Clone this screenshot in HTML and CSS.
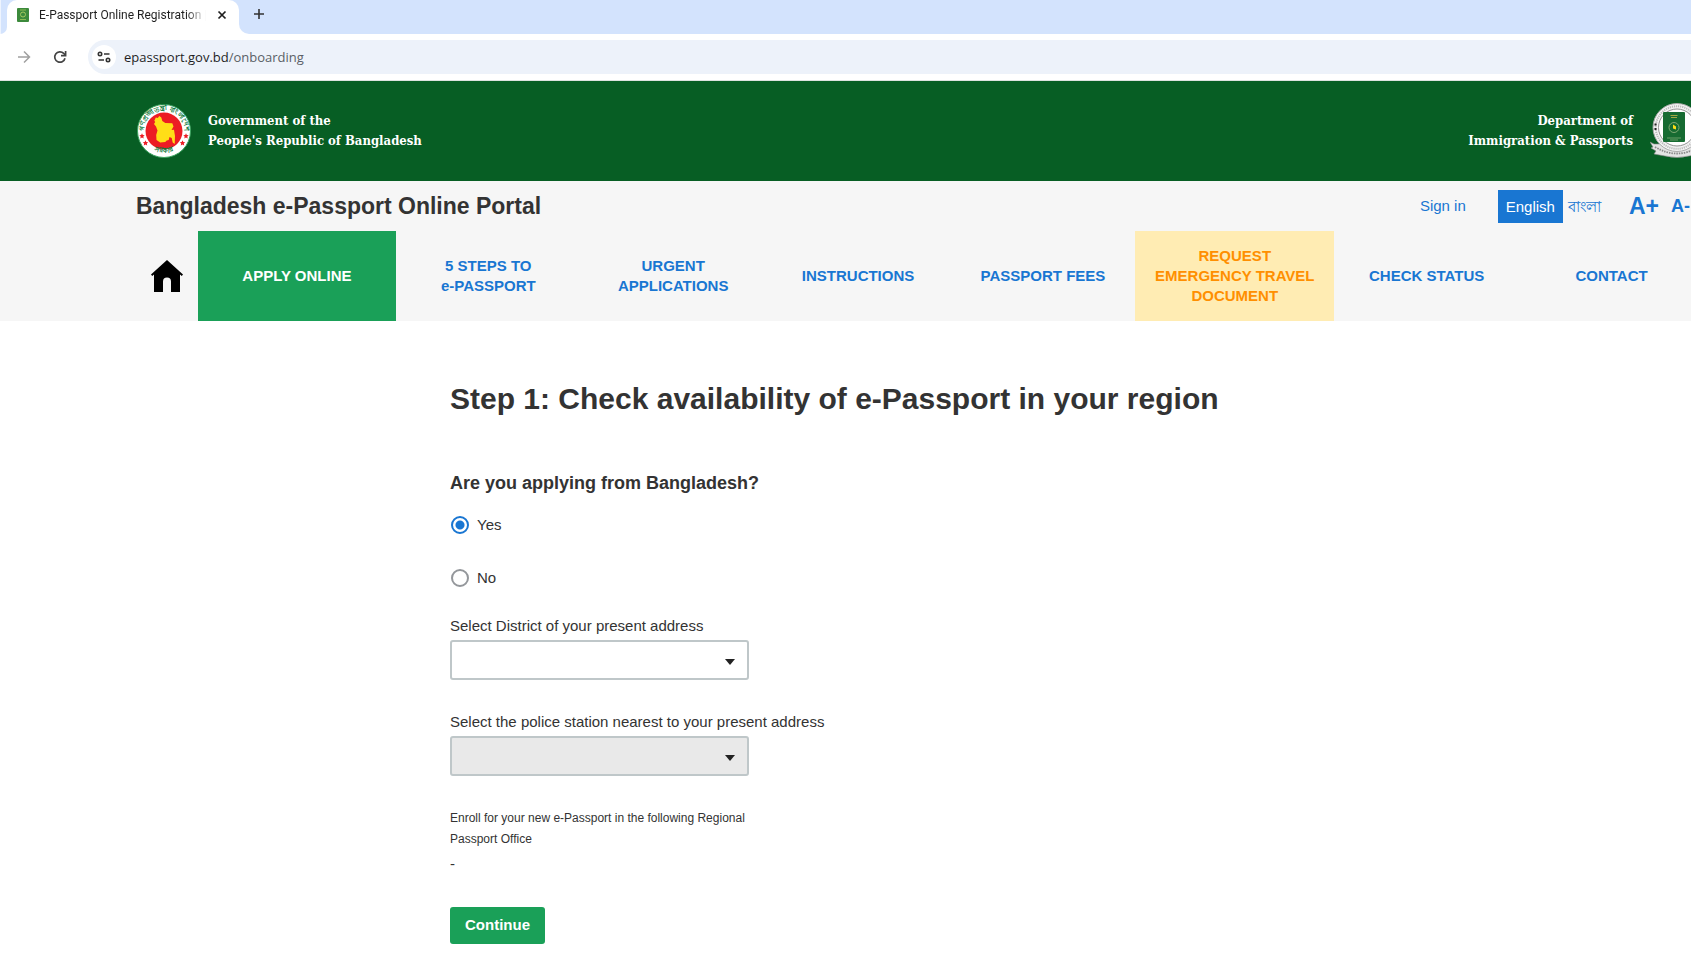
FILE: index.html
```html
<!DOCTYPE html>
<html lang="en">
<head>
    <meta charset="UTF-8">
    <meta name="viewport" content="width=device-width, initial-scale=1.0">
    <title>E-Passport Online Registration Portal</title>
    <link rel="stylesheet" href="styles.css">
</head>
<body>
    <div class="browser">
        <div class="tabs">
            <div class="prev-tab"></div>
            <div class="tab">
                <svg class="favicon" width="12" height="14" viewBox="0 0 12 14">
                    <rect width="12" height="14" rx="1" fill="#3c8a3c"/>
                    <circle cx="6" cy="6.500" r="2.500" fill="none" stroke="#a5c860"/>
                    <path d="M3 2h6M3 11.500h6" stroke="#8dbb55"/>
                </svg>
                <span class="tab-title">E-Passport Online Registration |</span>
                <button class="icon-button" aria-label="Close tab">
                    <svg width="10" height="10" viewBox="0 0 10 10"><path d="M1.500 1.500l7 7M8.500 1.500l-7 7" stroke="#1f1f1f" stroke-width="1.700"/></svg>
                </button>
            </div>
            <div class="tab-strip">
                <button class="icon-button new-tab" aria-label="New tab">
                    <svg width="12" height="12" viewBox="0 0 12 12"><path d="M6 1v10M1 6h10" stroke="#333" stroke-width="1.600"/></svg>
                </button>
            </div>
        </div>
        <div class="toolbar">
            <button class="icon-button" aria-label="Forward">
                <svg width="14" height="14" viewBox="0 0 14 14" fill="none" stroke="#a0a0a0" stroke-width="1.500"><path d="M1 7h11M7 1.500L12.500 7 7 12.500"/></svg>
            </button>
            <button class="icon-button" aria-label="Reload">
                <svg width="14" height="14" viewBox="0 0 14 14" fill="none" stroke="#444" stroke-width="1.700"><path d="M12 8.200A5.200 5.200 0 1 1 10.700 3.400L12.300 5"/><path d="M12.600 1v4.600H8"/></svg>
            </button>
            <div class="address">
                <button class="site-info" aria-label="Site information">
                    <svg width="14" height="12" viewBox="0 0 14 12" fill="none" stroke="#333" stroke-width="1.600"><circle cx="3" cy="3" r="1.700"/><path d="M7 3h5.500M1.500 9H7"/><circle cx="11" cy="9" r="1.700"/></svg>
                </button>
                <span class="url">epassport.gov.bd<span class="url-path">/onboarding</span></span>
            </div>
        </div>
    </div>

    <header>
        <div class="banner">
            <div class="wrap banner-row">
                <svg class="seal" width="55" height="54" viewBox="0 0 55 54">
                    <defs>
                        <path id="ringTop" d="M8.500 32A20.200 20.200 0 1 1 47.500 32"/>
                        <path id="ringBottom" d="M10 41A24.500 24.500 0 0 0 46 41"/>
                    </defs>
                    <circle cx="28" cy="27" r="26.500" fill="#fff" stroke="#3ba35f"/>
                    <circle cx="28" cy="27" r="18.500" fill="#ec1c24"/>
                    <path d="M18.300 16.700l1.500-3.200 2 .6 1.500-2.100 2 1.500 1 3.500 3 2 7 .3 1.200 3.200-2 3.500 2.500-.2 1 6.200-.3 8-2-1.500-1-4.500-2.200-1-.8 3-2 .5-1.500 1.500-5 .6-3.700-2.500-.3-5 1.300-4.500-1.500-4-2-2.500 1.200-2z" fill="#ffde17"/>
                    <text class="ring-text"><textPath href="#ringTop" startOffset="50%" text-anchor="middle">গণপ্রজাতন্ত্রী বাংলাদেশ</textPath></text>
                    <text class="ring-text"><textPath href="#ringBottom" startOffset="50%" text-anchor="middle">সরকার</textPath></text>
                    <g fill="#ec1c24">
                        <path id="star" d="M6 29.300l.8 1.700 1.900.2-1.400 1.300.4 1.900-1.700-1-1.700 1 .4-1.900-1.400-1.300 1.900-.2z"/>
                        <use href="#star" x="3.500" y="7"/>
                        <use href="#star" x="44" y="0"/>
                        <use href="#star" x="40.500" y="7"/>
                    </g>
                </svg>
                <p class="banner-text">Government of the<br>People's Republic of Bangladesh</p>
                <p class="banner-text dept">Department of<br>Immigration &amp; Passports</p>
                <svg class="seal" width="54" height="56" viewBox="0 0 54 56">
                    <path d="M4 41l-4-2 3 5-2 1 5 3-2 3 11 2q12 3 24 0l11-2-2-3 5-3-2-1 3-5-4 2z" fill="#e4e4e4" stroke="#888" stroke-width=".6"/>
                    <circle cx="27" cy="24.500" r="24" fill="#f4f4f4" stroke="#aaa"/>
                    <circle cx="27" cy="24.500" r="21.300" fill="none" stroke="#bbb" stroke-width="2" stroke-dasharray="1.200 .9"/>
                    <circle cx="27" cy="24.500" r="18.500" fill="#fff" stroke="#777" stroke-width=".8"/>
                    <path d="M5.500 20.500v2M5.500 25v2" stroke="#222" stroke-width="2"/>
                    <path d="M5 44q22 13 44 0" fill="none" stroke="#888" stroke-width="1.800" stroke-dasharray="1.500 1"/>
                    <rect x="13" y="9" width="22" height="30" rx="1" fill="#176b32"/>
                    <circle cx="24" cy="24.500" r="5" fill="none" stroke="#7fa872" stroke-width="1"/>
                    <path d="M23 21.500l3 2v3l-3-1z" fill="#ffde17"/>
                    <path d="M20.500 12.500h7M21 14.500h6" stroke="#c9b848" stroke-width=".8"/>
                    <path d="M17 35h14M20 37h8" stroke="#9fbf8a" stroke-width=".6"/>
                </svg>
            </div>
        </div>

        <div class="top">
            <div class="wrap">
                <div class="title-row">
                    <h2 class="portal-title">Bangladesh e-Passport Online Portal</h2>
                    <a class="signin" href="#">Sign in</a>
                    <a class="lang active" href="#">English</a>
                    <a class="lang" href="#" lang="bn">বাংলা</a>
                    <button class="font-up">A+</button>
                    <button class="font-down">A-</button>
                </div>
                <nav class="menu">
                    <a class="home" href="#" aria-label="Home">
                        <svg width="32" height="32" viewBox="0 0 32 32"><path d="M16 0l16 14.500-1.200 1.500L29 14.600V32h-9V21.500a4 4 0 0 0-8 0V32H3V14.600L1.200 16 0 14.500z"/></svg>
                    </a>
                    <a class="apply" href="#">APPLY ONLINE</a>
                    <a href="#">5 STEPS TO<br>e-PASSPORT</a>
                    <a href="#">URGENT<br>APPLICATIONS</a>
                    <a href="#">INSTRUCTIONS</a>
                    <a href="#">PASSPORT FEES</a>
                    <a class="emergency" href="#">REQUEST<br>EMERGENCY TRAVEL<br>DOCUMENT</a>
                    <a href="#">CHECK STATUS</a>
                    <a href="#">CONTACT</a>
                </nav>
            </div>
        </div>
    </header>

    <main>
        <h1>Step 1: Check availability of e-Passport in your region</h1>
        <form>
            <fieldset>
                <legend>Are you applying from Bangladesh?</legend>
                <label class="radio"><input type="radio" name="country" value="yes" checked>Yes</label>
                <label class="radio"><input type="radio" name="country" value="no">No</label>
            </fieldset>

            <div class="field">
                <label for="district">Select District of your present address</label>
                <select id="district"><option></option></select>
            </div>
            <div class="field">
                <label for="station">Select the police station nearest to your present address</label>
                <select id="station" disabled><option></option></select>
            </div>

            <p class="office">Enroll for your new e-Passport in the following Regional Passport Office</p>
            <p class="office-name">-</p>
            <button class="continue" type="submit">Continue</button>
        </form>
    </main>
</body>
</html>
```
FILE: styles.css
```css
* {
    box-sizing: border-box;
}

body {
    margin: 0;
    background: #fff;
    color: #333;
    font-family: "Liberation Sans", Arial, sans-serif;
    font-size: 15px;
    line-height: 20px;
    overflow-x: hidden;
}

h1, h2, p {
    margin: 0;
}

a {
    color: #1976d2;
    text-decoration: none;
}

button {
    font-family: inherit;
    border: 0;
    padding: 0;
    background: none;
    cursor: pointer;
}

/* browser bar */
.browser {
    font-family: "Open Sans", "Noto Sans", sans-serif;
    border-bottom: 1px solid #dde3df;
}

.tabs {
    display: flex;
    align-items: stretch;
    height: 34px;
    background: linear-gradient(#d3e3fd 60%, #fff 60%);
}

.prev-tab {
    width: 7px;
    background: #d3e3fd;
    border-left: 1px solid #eef4fe;
    border-radius: 0 0 7px 0;
}

.tab {
    display: flex;
    align-items: center;
    width: 232px;
    padding: 0 9px 4px 10px;
    background: #fff;
    border-radius: 10px 10px 0 0;
}

.tab-title {
    flex: 1;
    margin: 0 8px 0 10px;
    font-family: Roboto, sans-serif;
    font-size: 12px;
    color: #1f1f1f;
    white-space: nowrap;
    overflow: hidden;
    -webkit-mask-image: linear-gradient(to right, #000 88%, transparent);
    mask-image: linear-gradient(to right, #000 88%, transparent);
}

.tab-strip {
    flex: 1;
    display: flex;
    background: #d3e3fd;
    border-radius: 0 0 0 10px;
}

.icon-button {
    display: flex;
    align-items: center;
    justify-content: center;
    width: 16px;
}

.new-tab {
    width: 40px;
    padding-bottom: 6px;
}

.toolbar {
    display: flex;
    align-items: center;
    gap: 20px;
    height: 46px;
    padding-left: 16px;
}

.address {
    flex: 1;
    display: flex;
    align-items: center;
    gap: 8px;
    height: 34px;
    padding-left: 4px;
    background: #edf2fa;
    border-radius: 17px 0 0 17px;
}

.site-info {
    display: flex;
    align-items: center;
    justify-content: center;
    width: 24px;
    height: 24px;
    background: #fff;
    border-radius: 50%;
}

.url {
    font-size: 13px;
    color: #1f1f1f;
}

.url-path {
    color: #5a5f66;
}

/* site header */
.wrap {
    margin-left: 136px;
    margin-right: -13px;
}

.banner {
    background: #075e24;
}

.banner-row {
    display: flex;
    align-items: center;
    gap: 17px;
    height: 100px;
}

.seal {
    flex: none;
}

.ring-text {
    font-size: 7px;
    font-weight: bold;
    fill: #0b7a3b;
}

.banner-text {
    color: #fff;
    font-family: "DejaVu Serif Condensed", "DejaVu Serif", serif;
    font-size: 13px;
    font-weight: bold;
}

.dept {
    margin-left: auto;
    text-align: right;
}

.top {
    background: #f6f6f6;
}

.title-row {
    display: flex;
    align-items: center;
    height: 50px;
}

.portal-title {
    margin-right: auto;
    font-size: 23px;
    line-height: 28px;
}

.signin {
    margin-right: 32px;
}

.lang {
    padding: 7px 5px 6px;
}

.lang.active {
    padding: 7px 8px 6px;
    background: #1976d2;
    color: #fff;
}

.font-up, .font-down {
    color: #1976d2;
    font-weight: bold;
}

.font-up {
    margin-left: 23px;
    font-size: 23px;
}

.font-down {
    margin: 0 14px 0 12px;
    font-size: 18px;
}

.menu {
    display: grid;
    grid-template-columns: 62px 198fr 185fr 185fr 185fr 185fr 199fr 185fr 185fr;
    min-height: 90px;
}

.menu a {
    display: flex;
    align-items: center;
    justify-content: center;
    text-align: center;
    font-weight: bold;
}

.menu .apply {
    background: #1aa058;
    color: #fff;
}

.menu .emergency {
    background: #ffecb3;
    color: #ff8f00;
}

.home {
    fill: #000;
}

/* form */
main {
    margin-left: 450px;
    padding: 60px 0 20px;
}

h1 {
    font-size: 30px;
    line-height: 36px;
}

form {
    margin-top: 56px;
}

fieldset {
    margin: 0;
    padding: 0;
    border: 0;
}

legend {
    padding: 0;
    margin-bottom: 22px;
    font-size: 18px;
    font-weight: bold;
}

.radio {
    display: flex;
    align-items: center;
    gap: 8px;
    margin-bottom: 33px;
}

.radio:last-child {
    margin-bottom: 28px;
}

.radio input {
    appearance: none;
    width: 18px;
    height: 18px;
    margin: 0 0 0 1px;
    border: 2px solid #94979b;
    border-radius: 50%;
}

.radio input:checked {
    border-color: #1976d2;
    background: radial-gradient(circle, #1976d2 4px, #fff 5px);
}

.field {
    margin-bottom: 32px;
}

.field label {
    display: block;
    margin-bottom: 4px;
}

select {
    appearance: none;
    display: block;
    width: 299px;
    height: 40px;
    border: 2px solid #bfc7c9;
    border-radius: 3px;
    background: #fff url("data:image/svg+xml,%3Csvg xmlns='http://www.w3.org/2000/svg' width='10' height='6'%3E%3Cpath d='M0 0h10L5 6z' fill='%23222'/%3E%3C/svg%3E") no-repeat right 12px top 17px;
}

select:disabled {
    background-color: #e9e9e9;
    opacity: 1;
}

.office {
    width: 299px;
    margin-bottom: 4px;
    font-size: 12px;
    line-height: 21px;
}

.office-name {
    margin-bottom: 33px;
}

.continue {
    height: 37px;
    padding: 0 15px 2px;
    background: #1aa058;
    color: #fff;
    border-radius: 3px;
    font-size: 15px;
    font-weight: bold;
}
```
